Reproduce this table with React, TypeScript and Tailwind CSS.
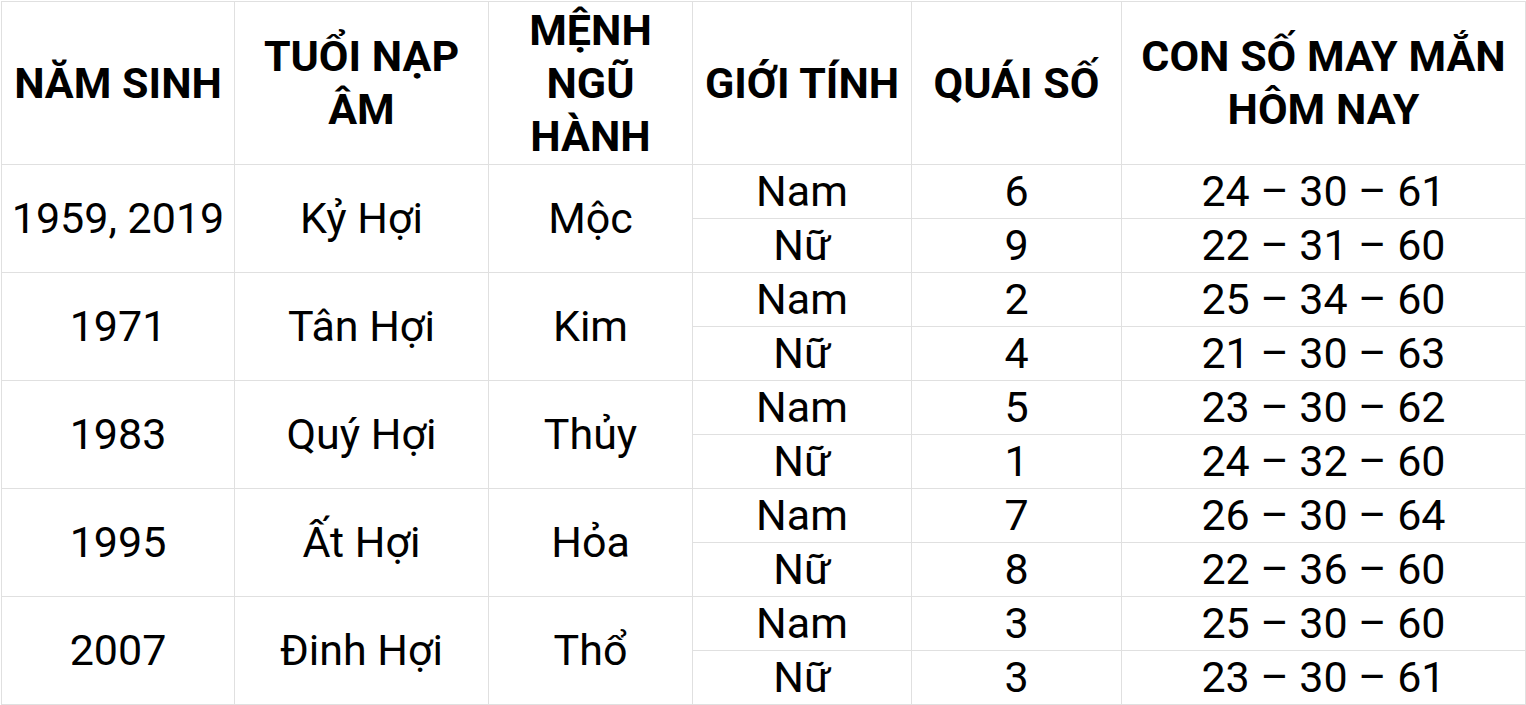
import React from "react";

interface Row {
  gender: string;
  quai: string;
  nums: string;
}

interface Group {
  year: string;
  tuoi: string;
  menh: string;
  rows: Row[];
}

const headers: React.ReactNode[] = [
  "NĂM SINH",
  <>TUỔI NẠP<br />ÂM</>,
  <>MỆNH<br />NGŨ<br />HÀNH</>,
  "GIỚI TÍNH",
  "QUÁI SỐ",
  <>CON SỐ MAY MẮN<br />HÔM NAY</>,
];

const groups: Group[] = [
  {
    year: "1959, 2019",
    tuoi: "Kỷ Hợi",
    menh: "Mộc",
    rows: [
      { gender: "Nam", quai: "6", nums: "24 – 30 – 61" },
      { gender: "Nữ", quai: "9", nums: "22 – 31 – 60" },
    ],
  },
  {
    year: "1971",
    tuoi: "Tân Hợi",
    menh: "Kim",
    rows: [
      { gender: "Nam", quai: "2", nums: "25 – 34 – 60" },
      { gender: "Nữ", quai: "4", nums: "21 – 30 – 63" },
    ],
  },
  {
    year: "1983",
    tuoi: "Quý Hợi",
    menh: "Thủy",
    rows: [
      { gender: "Nam", quai: "5", nums: "23 – 30 – 62" },
      { gender: "Nữ", quai: "1", nums: "24 – 32 – 60" },
    ],
  },
  {
    year: "1995",
    tuoi: "Ất Hợi",
    menh: "Hỏa",
    rows: [
      { gender: "Nam", quai: "7", nums: "26 – 30 – 64" },
      { gender: "Nữ", quai: "8", nums: "22 – 36 – 60" },
    ],
  },
  {
    year: "2007",
    tuoi: "Đinh Hợi",
    menh: "Thổ",
    rows: [
      { gender: "Nam", quai: "3", nums: "25 – 30 – 60" },
      { gender: "Nữ", quai: "3", nums: "23 – 30 – 61" },
    ],
  },
];

const cell = "bg-white flex items-center justify-center text-center";

export default function App() {
  return (
    <div className="bg-white w-[1526px] h-[705px] overflow-hidden pl-px pt-px font-['Roboto',sans-serif] text-black">
      <div className="grid grid-cols-[232px_253px_203px_218px_209px_403px] grid-rows-[162px_repeat(10,53px)] gap-px p-px bg-[#e0e0e0] w-[1525px]">
        {headers.map((h, i) => (
          <div key={i} className={`${cell} font-bold text-[43px] leading-[53px]`}>
            <span>{h}</span>
          </div>
        ))}
        {groups.map((g) => (
          <React.Fragment key={g.year}>
            <div className={`${cell} row-span-2 text-[43px] leading-none`}>{g.year}</div>
            <div className={`${cell} row-span-2 text-[43px] leading-none`}>{g.tuoi}</div>
            <div className={`${cell} row-span-2 text-[43px] leading-none`}>{g.menh}</div>
            {g.rows.map((r) => (
              <React.Fragment key={r.gender}>
                <div className={`${cell} text-[43px] leading-none`}>{r.gender}</div>
                <div className={`${cell} text-[43px] leading-none`}>{r.quai}</div>
                <div className={`${cell} text-[43px] leading-none`}>{r.nums}</div>
              </React.Fragment>
            ))}
          </React.Fragment>
        ))}
      </div>
    </div>
  );
}
